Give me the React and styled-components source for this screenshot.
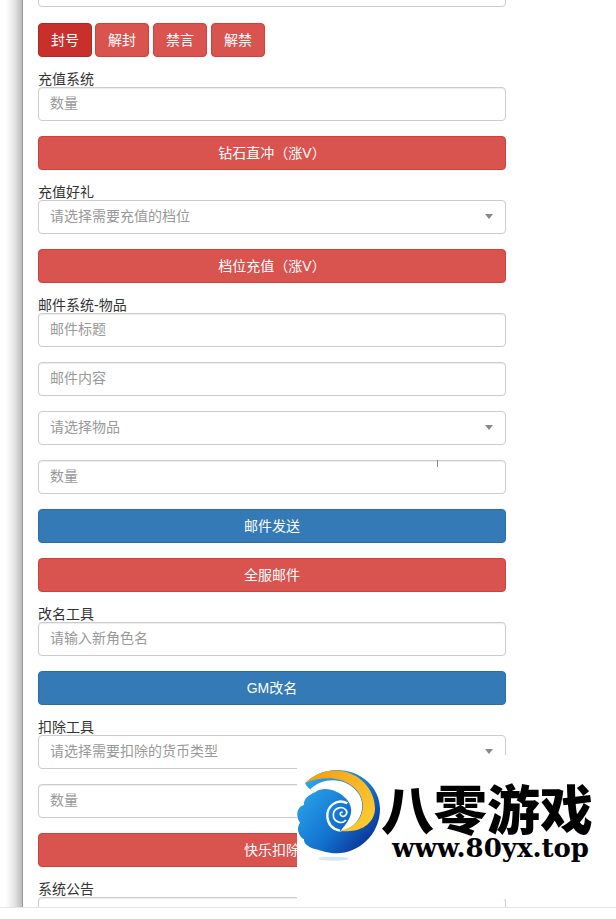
import React from "react"
import styled, { createGlobalStyle } from "styled-components"

const GlobalStyle = createGlobalStyle`
  * { box-sizing: border-box; }
  html, body { margin: 0; padding: 0; background: #fff; }
  body {
    font-family: "Liberation Sans", "Noto Sans CJK SC", sans-serif;
    font-size: 14px;
    color: #333;
  }
`

const Logo = () => (
  <LogoBox>
    <svg width="86" height="96" viewBox="21 21 258 288">
      <defs>
        <linearGradient id="blue" x1="0.1" y1="0.2" x2="0.9" y2="0.9">
          <stop offset="0" stopColor="#2ba3ea" />
          <stop offset="0.55" stopColor="#1273cf" />
          <stop offset="1" stopColor="#0a2f92" />
        </linearGradient>
        <linearGradient id="gold" x1="0" y1="0" x2="1" y2="0.7">
          <stop offset="0" stopColor="#f19a12" />
          <stop offset="1" stopColor="#fdc92f" />
        </linearGradient>
      </defs>
      <path
        d="M140 30C215 30 272 85 270 150C268 225 205 280 140 280C110 280 95 272 78 268C60 264 40 252 42 238C25 228 18 205 30 188C16 170 20 140 42 135C40 118 55 105 75 97C60 90 50 80 45 70C70 45 105 30 140 30Z"
        fill="url(#blue)"
      />
      <path
        d="M60 88C100 50 170 50 205 100C235 145 205 205 150 215C175 185 200 155 170 118C142 88 100 78 75 97Z"
        fill="#fff"
      />
      <path
        d="M45 70C70 42 110 28 150 32C205 38 255 85 255 145C255 190 210 222 150 212C195 205 222 170 218 130C212 85 165 55 115 55C90 55 65 60 45 70Z"
        fill="url(#gold)"
      />
      <path d="M172 130C140 113 110 140 112 170C114 195 130 208 150 212" fill="none" stroke="#fff" strokeWidth="7" />
      <path
        d="M168 180C155 195 130 185 130 165C130 145 155 135 168 150C175 160 165 172 155 168C148 165 150 155 158 157"
        fill="none"
        stroke="#fff"
        strokeWidth="5"
      />
      <ellipse cx="130" cy="296" rx="45" ry="6" fill="#d5e6f5" />
    </svg>
    <LogoText>
      <LogoName>八零游戏</LogoName>
      <LogoUrl>www.80yx.top</LogoUrl>
    </LogoText>
  </LogoBox>
)

const App = () => (
  <>
    <GlobalStyle />
    <Screen>
      <Viewport>
        <Panel>
          <Form>
            <Input placeholder="" />
            <ActionRow>
              <SmallButton $active>封号</SmallButton>
              <SmallButton>解封</SmallButton>
              <SmallButton>禁言</SmallButton>
              <SmallButton>解禁</SmallButton>
            </ActionRow>
            <Section>
              <Label>充值系统</Label>
              <Input placeholder="数量" />
              <Button>钻石直冲（涨V）</Button>
            </Section>
            <Section>
              <Label>充值好礼</Label>
              <Select>请选择需要充值的档位</Select>
              <Button>档位充值（涨V）</Button>
            </Section>
            <Section>
              <Label>邮件系统-物品</Label>
              <Input placeholder="邮件标题" />
              <Input placeholder="邮件内容" />
              <Select>请选择物品</Select>
              <Field>
                <Input placeholder="数量" />
                <Tick />
              </Field>
              <Button $blue>邮件发送</Button>
              <Button>全服邮件</Button>
            </Section>
            <Section>
              <Label>改名工具</Label>
              <Input placeholder="请输入新角色名" />
              <Button $blue>GM改名</Button>
            </Section>
            <Section>
              <Label>扣除工具</Label>
              <Select>请选择需要扣除的货币类型</Select>
              <Input placeholder="数量" />
              <Button>快乐扣除</Button>
            </Section>
            <Section>
              <Label>系统公告</Label>
              <Input placeholder="" />
            </Section>
          </Form>
        </Panel>
        <Logo />
      </Viewport>
      <BottomStrip />
    </Screen>
  </>
)

export default App

const Screen = styled.div`
  width: 616px;
  height: 919px;
  overflow: hidden;
  background: #fff;
`

const Viewport = styled.div`
  position: relative;
  height: 907px;
  overflow: hidden;
  background: linear-gradient(to right, #fff 0, #fff 6px, #e6e6e6 14px, #bdbdbd 22px, #fff 22px);
`

const Panel = styled.div`
  display: flow-root;
  margin-left: 22px;
  width: 594px;
  height: 100%;
  background: #fff;
  border-left: 1px solid #9a9a9a;
  padding-left: 15px;
`

const Form = styled.div`
  width: 468px;
  margin-top: -27px;
  display: flex;
  flex-direction: column;
  gap: 12px;
`

const ActionRow = styled.div`
  display: flex;
  gap: 4px;
  margin-top: 4px;
`

const SmallButton = styled.button`
  width: 54px;
  height: 34px;
  padding: 0 0 2px;
  font: inherit;
  color: #fff;
  border: 1px solid ${p => (p.$active ? "#ac2925" : "#d43f3a")};
  border-radius: 4px;
  background: ${p => (p.$active ? "#c9302c" : "#d9534f")};
  &:first-child { margin-right: -1px; }
`

const Section = styled.div`
  display: flex;
  flex-direction: column;
  gap: 15px;
`

const Label = styled.label`
  height: 18px;
  line-height: 20px;
  margin-bottom: -15px;
  font-size: 14px;
  color: #333;
`

const Field = styled.div`
  position: relative;
`

const Tick = styled.span`
  position: absolute;
  left: 399px;
  top: 0;
  width: 1px;
  height: 7px;
  background: #8a8a8a;
`

const Input = styled.input`
  display: block;
  width: 100%;
  height: 34px;
  padding: 5px 11px 7px;
  font: inherit;
  color: #555;
  background: #fff;
  border: 1px solid #ccc;
  border-radius: 4px;
  box-shadow: inset 0 1px 1px rgba(0, 0, 0, 0.075);
  &::placeholder { color: #999; opacity: 1; }
`

const Select = styled.div`
  position: relative;
  width: 100%;
  height: 34px;
  padding: 5px 11px 7px;
  line-height: 20px;
  color: #999;
  border: 1px solid #ccc;
  border-radius: 4px;
  &::after {
    content: "";
    position: absolute;
    right: 12px;
    top: 13px;
    border-style: solid;
    border-width: 5px 4px 0;
    border-color: #888 transparent transparent;
  }
`

const Button = styled.button`
  display: block;
  width: 100%;
  height: 34px;
  padding: 0 0 2px;
  font: inherit;
  color: #fff;
  border: 1px solid ${p => (p.$blue ? "#2e6da4" : "#d43f3a")};
  border-radius: 4px;
  background: ${p => (p.$blue ? "#337ab7" : "#d9534f")};
`

const LogoBox = styled.div`
  position: absolute;
  left: 297px;
  top: 755px;
  width: 319px;
  height: 144px;
  background: #fff;
  display: flex;
  align-items: flex-start;
  padding-top: 12px;
`

const LogoText = styled.div`
  margin-left: -4px;
  margin-top: 12px;
  display: flex;
  flex-direction: column;
  align-items: center;
  width: 216px;
`

const LogoName = styled.div`
  font-family: "Noto Sans CJK SC", sans-serif;
  font-weight: 900;
  font-size: 53px;
  line-height: 56px;
  color: #000;
  white-space: nowrap;
`

const LogoUrl = styled.div`
  margin-left: 7px;
  font-family: "DejaVu Serif", serif;
  font-weight: 700;
  font-size: 26px;
  line-height: 26px;
  color: #000;
  white-space: nowrap;
`

const BottomStrip = styled.div`
  height: 12px;
  background: #fff;
  border-top: 1px solid #e4e4e4;
`
